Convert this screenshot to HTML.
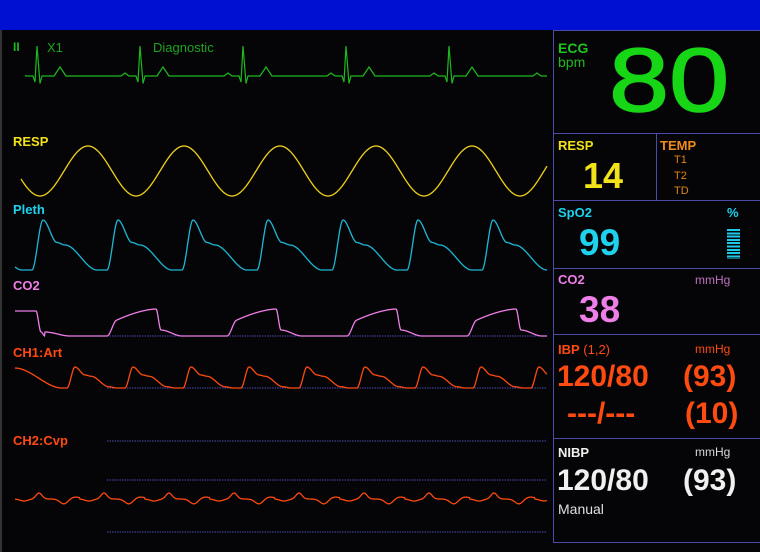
<!DOCTYPE html>
<html><head><meta charset="utf-8"><style>
*{margin:0;padding:0;box-sizing:border-box}
body{width:760px;height:552px;background:#050507;position:relative;overflow:hidden;font-family:"Liberation Sans",sans-serif}
.hdr{position:absolute;left:0;top:0;width:760px;height:30px;background:#0010d2}
.lb{position:absolute;left:0;top:30px;width:2px;height:522px;background:#333}
.t{position:absolute;white-space:nowrap;line-height:1}
.box{position:absolute;border:1px solid #4a4aa8}
</style></head><body>
<div class="hdr"></div><div class="lb"></div>
<svg id="w" width="552" height="552" style="position:absolute;left:0;top:0"></svg>
<div class="t" style="left:13px;top:41px;color:#1fb81f;font-weight:bold;font-size:12px">II</div>
<div class="t" style="left:47px;top:41px;color:#1fa21f;font-size:13px">X1</div>
<div class="t" style="left:153px;top:41px;color:#1fa21f;font-size:13px">Diagnostic</div>
<div class="t" style="left:13px;top:135px;color:#f2e21a;font-weight:bold;font-size:13px">RESP</div>
<div class="t" style="left:13px;top:203px;color:#1ed2ee;font-weight:bold;font-size:13px">Pleth</div>
<div class="t" style="left:13px;top:279px;color:#ee7ee8;font-weight:bold;font-size:13px">CO2</div>
<div class="t" style="left:13px;top:346px;color:#ff4a10;font-weight:bold;font-size:13px">CH1:Art</div>
<div class="t" style="left:13px;top:434px;color:#ff4a10;font-weight:bold;font-size:13px">CH2:Cvp</div>

<div class="box" style="left:553px;top:30px;width:208px;height:104px"></div>
<div class="box" style="left:553px;top:133px;width:208px;height:68px"></div>
<div class="box" style="left:656px;top:133px;width:105px;height:68px"></div>
<div class="box" style="left:553px;top:200px;width:208px;height:69px"></div>
<div class="box" style="left:553px;top:268px;width:208px;height:67px"></div>
<div class="box" style="left:553px;top:334px;width:208px;height:105px"></div>
<div class="box" style="left:553px;top:438px;width:208px;height:105px"></div>

<div class="t" style="left:558px;top:41px;color:#1fc41f;font-weight:bold;font-size:14px">ECG</div>
<div class="t" style="left:558px;top:55px;color:#1fb81f;font-size:14px">bpm</div>
<div class="t" style="left:609px;top:36px;color:#16d616;font-size:90px;transform:scaleX(1.2);transform-origin:left top;-webkit-text-stroke:1.5px #16d616">80</div>

<div class="t" style="left:558px;top:139px;color:#f2e21a;font-weight:bold;font-size:13px">RESP</div>
<div class="t" style="left:583px;top:158px;color:#f2e21a;font-weight:bold;font-size:36px">14</div>
<div class="t" style="left:660px;top:139px;color:#f08a1a;font-weight:bold;font-size:13px">TEMP</div>
<div class="t" style="left:674px;top:155px;color:#e08418;font-size:11px">T1</div>
<div class="t" style="left:674px;top:171px;color:#e08418;font-size:11px">T2</div>
<div class="t" style="left:674px;top:186px;color:#e08418;font-size:11px">TD</div>

<div class="t" style="left:558px;top:206px;color:#1ed2ee;font-weight:bold;font-size:13px">SpO2</div>
<div class="t" style="left:727px;top:206px;color:#1ed2ee;font-weight:bold;font-size:13px">%</div>
<div class="t" style="left:579px;top:224px;color:#1ed2ee;font-weight:bold;font-size:37px">99</div>
<div style="position:absolute;left:727px;top:229px;width:13px;height:30px;background:repeating-linear-gradient(#1ec8e8 0 2px,transparent 2px 3.3px)"></div>

<div class="t" style="left:558px;top:273px;color:#ee7ee8;font-weight:bold;font-size:13px">CO2</div>
<div class="t" style="left:695px;top:274px;color:#c070c0;font-size:12px">mmHg</div>
<div class="t" style="left:579px;top:291px;color:#ee7ee8;font-weight:bold;font-size:37px">38</div>

<div class="t" style="left:558px;top:343px;color:#ff4a10;font-size:13px"><b>IBP</b> (1,2)</div>
<div class="t" style="left:695px;top:343px;color:#ff4a10;font-size:12px">mmHg</div>
<div class="t" style="left:557px;top:362px;color:#ff4a10;font-weight:bold;font-size:30px">120/80</div>
<div class="t" style="left:683px;top:362px;color:#ff4a10;font-weight:bold;font-size:30px">(93)</div>
<div class="t" style="left:567px;top:399px;color:#ff4a10;font-weight:bold;font-size:30px">---/---</div>
<div class="t" style="left:685px;top:399px;color:#ff4a10;font-weight:bold;font-size:30px">(10)</div>

<div class="t" style="left:558px;top:446px;color:#f0f0f0;font-weight:bold;font-size:13px">NIBP</div>
<div class="t" style="left:695px;top:446px;color:#d8d8d8;font-size:12px">mmHg</div>
<div class="t" style="left:557px;top:466px;color:#f0f0f0;font-weight:bold;font-size:30px">120/80</div>
<div class="t" style="left:683px;top:466px;color:#f0f0f0;font-weight:bold;font-size:30px">(93)</div>
<div class="t" style="left:558px;top:502px;color:#e0e0e0;font-size:14px">Manual</div>

<script>
var s=document.getElementById('w'),NS='http://www.w3.org/2000/svg';
function P(f,x0,x1,c,w){var d='';for(var x=x0;x<=x1;x+=0.5){d+=(x==x0?'M':'L')+x.toFixed(1)+' '+f(x).toFixed(2)}var p=document.createElementNS(NS,'path');p.setAttribute('d',d);p.setAttribute('fill','none');p.setAttribute('stroke',c);p.setAttribute('stroke-width',w||1.3);s.appendChild(p)}
function L(y,x0,x1){var p=document.createElementNS(NS,'line');p.setAttribute('x1',x0);p.setAttribute('x2',x1);p.setAttribute('y1',y);p.setAttribute('y2',y);p.setAttribute('stroke','#4a4ab0');p.setAttribute('stroke-dasharray','1.5 1');s.appendChild(p)}
L(336,107,547);L(388,107,547);L(441,107,547);L(480,107,547);L(532,107,547);
function g(x,c,w){return Math.exp(-((x-c)*(x-c))/(2*w*w))}
function tri(x,c,hw,h){var a=Math.abs(x-c);return a<hw?h*(1-a/hw):0}
function ss(a,b,t){if(t<=a)return 0;if(t>=b)return 1;var u=(t-a)/(b-a);return u*u*(3-2*u)}
P(function(x){var t=((x-35)%103+103)%103;if(t>80)t-=103;var y=76;
 if(t>=-2&&t<0)y=76+(t+2)*3; else if(t>=0&&t<2)y=82-t*18; else if(t>=2&&t<5)y=46+(t-2)*12.5; else if(t>=5&&t<7)y=83.5-(t-5)*3.75;
 y-=tri(t,25,6,9);y-=tri(t,-13,4,3);return y},25,547,'#1fb81f',1.2);
P(function(x){return 171-25*Math.sin((x-64)/96*2*Math.PI)},21,547,'#f2d21a');
P(function(x){var t=((x-29)%75+75)%75;var f;
 if(t<3)f=1; else if(t<14)f=1-ss(3,14,t); else if(t<28)f=0.45*ss(14,28,t); else if(t<36)f=0.45+0.05*ss(28,36,t); else if(t<68)f=0.5+0.5*ss(36,68,t); else f=1;
 return 220+50*f},15,547,'#1eb8d6');
P(function(x){var t=((x-107)%120+120)%120;var y;
 if(t<10)y=336-16*ss(0,10,t); else if(t<49)y=320-11*(1-Math.pow(1-(t-10)/39,1.6)); else if(t<54)y=309+21*ss(49,54,t); else if(t<75)y=330+6*ss(54,75,t); else y=336;
 if(x<36)y=311; else if(x<45)y=311+21*ss(36,41,x)+4*ss(41,45,x); else if(x<70)y=Math.min(336,332+4*ss(45,70,x));
 return Math.min(y,336)},15,547,'#ee7ee8');
P(function(x){var t=((x-9)%58+58)%58;var f;
 if(t<8)f=1-ss(0,8,t); else if(t<18)f=0.38*ss(8,18,t); else if(t<24)f=0.38+0.06*ss(18,24,t); else if(t<42)f=0.44+0.5*ss(24,42,t); else f=0.94+0.06*ss(42,50,t);
 if(x<67)f=0.05+0.95*ss(15,62,x);
 return 367+21*f},15,547,'#ff4a10');
P(function(x){var t=((x-15)%65+65)%65;return 499-6*g(t,24,3)+5*g(t,49,4)-2*g(t,60,5)+2*g(t,9,4)},15,547,'#ff4a10');
</script>
</body></html>
